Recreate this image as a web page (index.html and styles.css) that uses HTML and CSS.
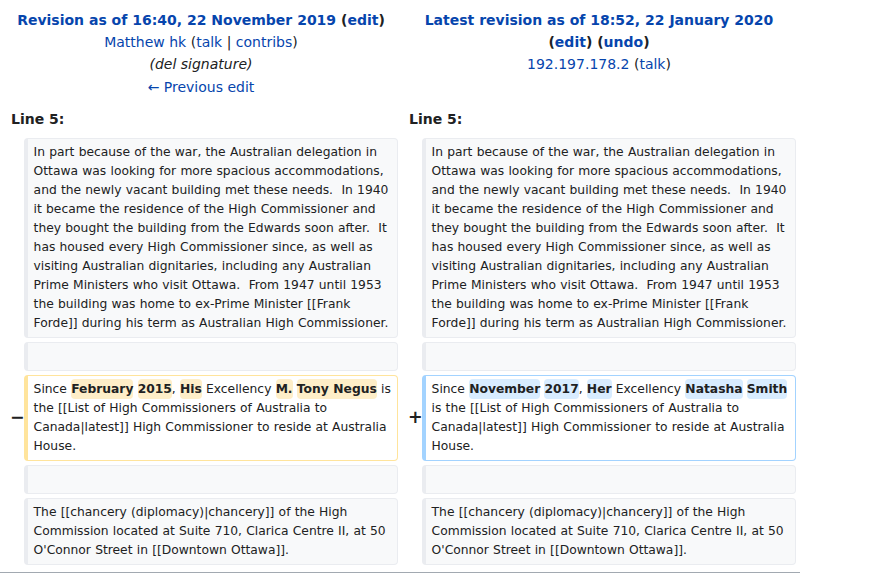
FILE: index.html
```html
<!DOCTYPE html>
<html lang="en">
<head>
<meta charset="utf-8">
<title>Diff</title>
<link rel="stylesheet" href="styles.css">
</head>
<body>
<div class="page">
<table class="diff">
  <colgroup>
    <col class="c-marker"><col class="c-content"><col class="c-marker"><col class="c-content">
  </colgroup>
  <tr class="diff-title">
    <td colspan="2" class="otitle">
      <div><strong><a href="#">Revision as of 16:40, 22 November 2019</a> (<a href="#">edit</a>)</strong></div>
      <div><a href="#">Matthew hk</a> (<a href="#">talk</a> | <a href="#">contribs</a>)</div>
      <div class="comment">(del signature)</div>
      <div><a href="#">← Previous edit</a></div>
    </td>
    <td colspan="2" class="ntitle">
      <div><strong><a href="#">Latest revision as of 18:52, 22 January 2020</a> (<a href="#">edit</a>) (<a href="#">undo</a>)</strong></div>
      <div><a href="#">192.197.178.2</a> (<a href="#">talk</a>)</div>
    </td>
  </tr>
  <tr>
    <td colspan="2" class="lineno">Line 5:</td>
    <td colspan="2" class="lineno">Line 5:</td>
  </tr>
  <tr>
    <td class="marker"></td>
    <td class="cell context"><div>In part because of the war, the Australian delegation in Ottawa was looking for more spacious accommodations, and the newly vacant building met these needs.  In 1940 it became the residence of the High Commissioner and they bought the building from the Edwards soon after.  It has housed every High Commissioner since, as well as visiting Australian dignitaries, including any Australian Prime Ministers who visit Ottawa.  From 1947 until 1953 the building was home to ex-Prime Minister [[Frank Forde]] during his term as Australian High Commissioner.</div></td>
    <td class="marker"></td>
    <td class="cell context"><div>In part because of the war, the Australian delegation in Ottawa was looking for more spacious accommodations, and the newly vacant building met these needs.  In 1940 it became the residence of the High Commissioner and they bought the building from the Edwards soon after.  It has housed every High Commissioner since, as well as visiting Australian dignitaries, including any Australian Prime Ministers who visit Ottawa.  From 1947 until 1953 the building was home to ex-Prime Minister [[Frank Forde]] during his term as Australian High Commissioner.</div></td>
  </tr>
  <tr>
    <td class="marker"></td>
    <td class="cell context"><br></td>
    <td class="marker"></td>
    <td class="cell context"><br></td>
  </tr>
  <tr>
    <td class="marker">−</td>
    <td class="cell deleted"><div>Since <span class="chg">February</span> <span class="chg">2015</span>, <span class="chg">His</span> Excellency <span class="chg">M.</span> <span class="chg">Tony Negus</span> is the [[List of High Commissioners of Australia to Canada|latest]] High Commissioner to reside at Australia House.</div></td>
    <td class="marker">+</td>
    <td class="cell added"><div>Since <span class="chg">November</span> <span class="chg">2017</span>, <span class="chg">Her</span> Excellency <span class="chg">Natasha</span> <span class="chg">Smith</span> is the [[List of High Commissioners of Australia to Canada|latest]] High Commissioner to reside at Australia House.</div></td>
  </tr>
  <tr>
    <td class="marker"></td>
    <td class="cell context"><br></td>
    <td class="marker"></td>
    <td class="cell context"><br></td>
  </tr>
  <tr>
    <td class="marker"></td>
    <td class="cell context"><div>The [[chancery (diplomacy)|chancery]] of the High Commission located at Suite 710, Clarica Centre II, at 50 O'Connor Street in [[Downtown Ottawa]].</div></td>
    <td class="marker"></td>
    <td class="cell context"><div>The [[chancery (diplomacy)|chancery]] of the High Commission located at Suite 710, Clarica Centre II, at 50 O'Connor Street in [[Downtown Ottawa]].</div></td>
  </tr>
</table>
<hr class="diff-hr">
</div>
</body>
</html>
```

FILE: styles.css
```css
html, body {
  margin: 0;
  padding: 0;
  background: #fff;
}
body {
  font-family: "DejaVu Sans", sans-serif;
  font-size: 14px;
  line-height: 1.6;
  color: #202122;
}
.page {
  width: 800px;
}
a {
  color: #0645ad;
  text-decoration: none;
}
.diff {
  border: 0;
  border-spacing: 4px;
  margin: 0;
  width: 100%;
  table-layout: fixed;
}
.c-marker { width: 2%; }
.c-content { width: 48%; }
.diff td {
  padding: 0.33em 0.5em;
}
.diff .diff-title td {
  text-align: center;
  vertical-align: top;
  padding: 4.6px 7px 0;
}
.comment {
  font-style: italic;
}
.diff td.lineno {
  font-weight: bold;
  padding: 5.6px 7px 3.6px;
}
.diff td.marker {
  text-align: left;
  font-weight: bold;
  font-size: 17.5px;
  line-height: 1.2;
  padding: 0 0 0 6px;
  vertical-align: middle;
  white-space: nowrap;
}
.diff td.cell {
  font-size: 12.3px;
  line-height: 19px;
  word-spacing: 0.3px;
  padding: 4px 4px 4px 6px;
  vertical-align: top;
  white-space: pre-wrap;
  border-style: solid;
  border-width: 1px 1px 1px 4px;
  border-radius: 4px;
}
.cell div {
  word-wrap: break-word;
}
.context {
  background: #f8f9fa;
  border-color: #eaecf0;
}
.deleted {
  background: #fff;
  border-color: #ffe49c;
}
.added {
  background: #fff;
  border-color: #a3d3ff;
}
.chg {
  font-weight: bold;
  border-radius: 4px;
  padding: 3px 0;
}
.deleted .chg { background: #feeec8; }
.added .chg { background: #d8ecff; }
.diff-hr {
  height: 1px;
  background-color: #a2a9b1;
  border: 0;
  margin: 3px 0;
}
```
